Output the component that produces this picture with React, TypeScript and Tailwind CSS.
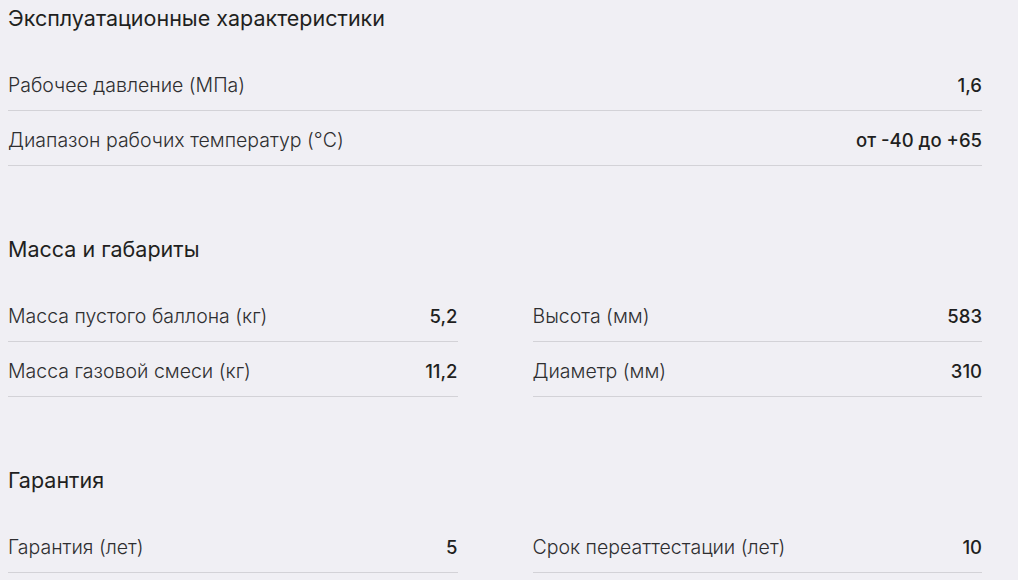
type Spec = { label: string; value: string };

const operation: Spec[] = [
  { label: "Рабочее давление (МПа)", value: "1,6" },
  { label: "Диапазон рабочих температур (°C)", value: "от -40 до +65" },
];

const massLeft: Spec[] = [
  { label: "Масса пустого баллона (кг)", value: "5,2" },
  { label: "Масса газовой смеси (кг)", value: "11,2" },
];

const massRight: Spec[] = [
  { label: "Высота (мм)", value: "583" },
  { label: "Диаметр (мм)", value: "310" },
];

const warrantyLeft: Spec[] = [{ label: "Гарантия (лет)", value: "5" }];
const warrantyRight: Spec[] = [{ label: "Срок переаттестации (лет)", value: "10" }];

function Row({ label, value }: Spec) {
  return (
    <div className="flex h-[55px] items-center justify-between border-b border-[#d3d2d7] pt-[5px]">
      <span className="text-[19.5px] font-light text-[#2e2e30]">{label}</span>
      <span className="text-[18.5px] font-medium text-[#1f1f21]">{value}</span>
    </div>
  );
}

function SpecList({ items }: { items: Spec[] }) {
  return (
    <div className="flex flex-col">
      {items.map((s) => (
        <Row key={s.label} {...s} />
      ))}
    </div>
  );
}

function Section({ title, children }: { title: string; children: React.ReactNode }) {
  return (
    <section>
      {/* Section heading */}
      <h2 className="mb-[20px] text-[21.5px] leading-[36px] font-normal text-[#1f1f21]">{title}</h2>
      {children}
    </section>
  );
}

export default function App() {
  return (
    <div
      className="min-h-[580px] w-full bg-[#f0eff4] pl-2 pr-[36px]"
      style={{ fontFamily: "Inter, 'Noto Sans', sans-serif" }}
    >
      <div className="flex flex-col gap-[65px]">
        <Section title="Эксплуатационные характеристики">
          <SpecList items={operation} />
        </Section>

        <Section title="Масса и габариты">
          <div className="grid grid-cols-2 gap-x-[75px]">
            <SpecList items={massLeft} />
            <SpecList items={massRight} />
          </div>
        </Section>

        <Section title="Гарантия">
          <div className="grid grid-cols-2 gap-x-[75px]">
            <SpecList items={warrantyLeft} />
            <SpecList items={warrantyRight} />
          </div>
        </Section>
      </div>
    </div>
  );
}
